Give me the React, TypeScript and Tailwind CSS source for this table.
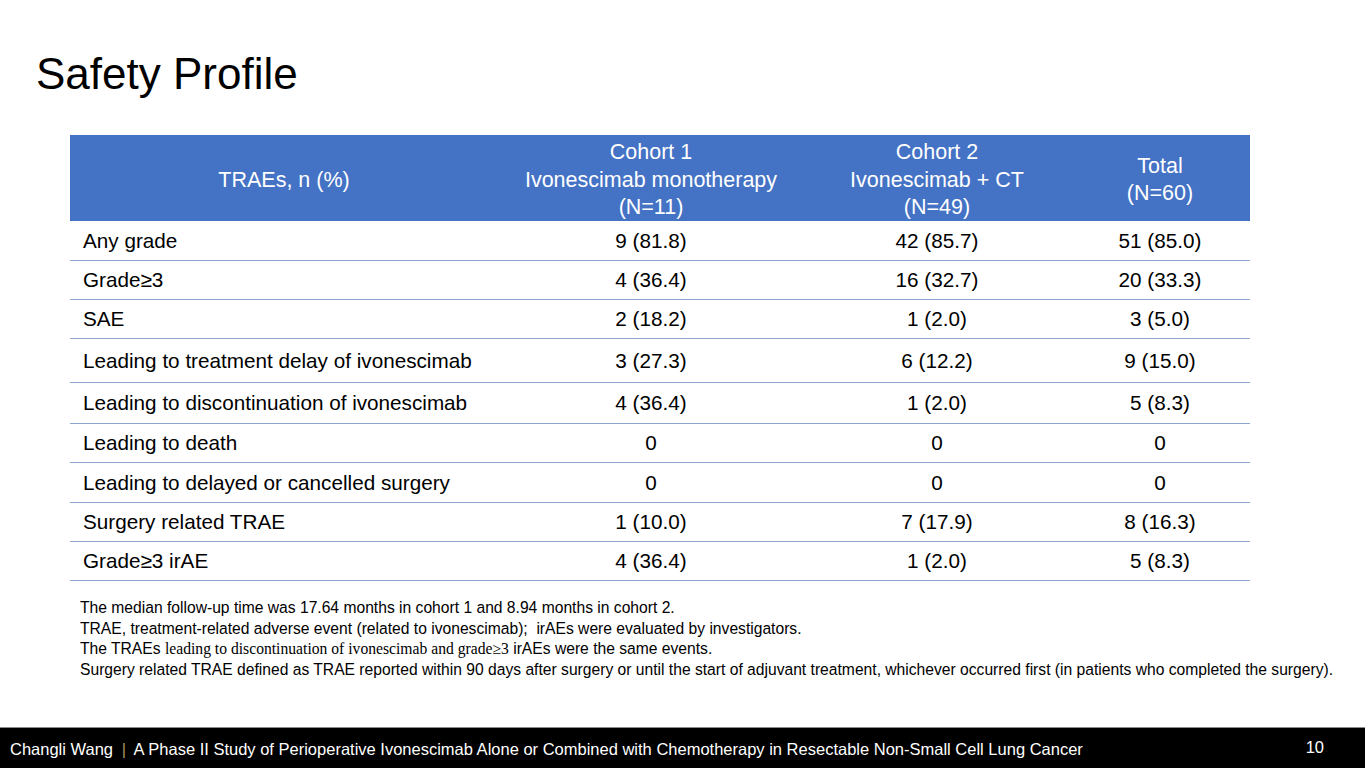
const rows = [
  { label: "Any grade", c1: "9 (81.8)", c2: "42 (85.7)", t: "51 (85.0)", h: "h-[40px]" },
  { label: "Grade≥3", c1: "4 (36.4)", c2: "16 (32.7)", t: "20 (33.3)", h: "h-[39px]" },
  { label: "SAE", c1: "2 (18.2)", c2: "1 (2.0)", t: "3 (5.0)", h: "h-[39px]" },
  { label: "Leading to treatment delay of ivonescimab", c1: "3 (27.3)", c2: "6 (12.2)", t: "9 (15.0)", h: "h-[44px]" },
  { label: "Leading to discontinuation of ivonescimab", c1: "4 (36.4)", c2: "1 (2.0)", t: "5 (8.3)", h: "h-[41px]" },
  { label: "Leading to death", c1: "0", c2: "0", t: "0", h: "h-[39px]" },
  { label: "Leading to delayed or cancelled surgery", c1: "0", c2: "0", t: "0", h: "h-[40px]" },
  { label: "Surgery related TRAE", c1: "1 (10.0)", c2: "7 (17.9)", t: "8 (16.3)", h: "h-[39px]" },
  { label: "Grade≥3 irAE", c1: "4 (36.4)", c2: "1 (2.0)", t: "5 (8.3)", h: "h-[39px]" },
]

const cols = "grid grid-cols-[428px_306px_266px_180px]"

const App = () => {
  return (
    <div className="w-[1365px] h-[768px] bg-white flex flex-col font-['Liberation_Sans',Arial,sans-serif] text-black overflow-hidden">
      <h1 className="mt-[52px] ml-[36px] text-[44px] leading-[44px] font-normal">Safety Profile</h1>

      <div className="mt-[39px] ml-[70px] w-[1180px]">
        <div className={`${cols} h-[86px] pt-[4px] bg-[#4472c4] text-white text-[21.5px] leading-[27.5px]`}>
          <div className="flex items-center justify-center">TRAEs, n (%)</div>
          <div className="flex flex-col items-center justify-center text-center">
            <span>Cohort 1</span>
            <span>Ivonescimab monotherapy</span>
            <span>(N=11)</span>
          </div>
          <div className="flex flex-col items-center justify-center text-center">
            <span>Cohort 2</span>
            <span>Ivonescimab + CT</span>
            <span>(N=49)</span>
          </div>
          <div className="flex flex-col items-center justify-center text-center">
            <span>Total</span>
            <span>(N=60)</span>
          </div>
        </div>
        {rows.map((r) => (
          <div key={r.label} className={`${cols} ${r.h} border-b border-[#8fa6cc] text-[20.7px]`}>
            <div className="flex items-center pl-[13px]">{r.label}</div>
            <div className="flex items-center justify-center">{r.c1}</div>
            <div className="flex items-center justify-center">{r.c2}</div>
            <div className="flex items-center justify-center">{r.t}</div>
          </div>
        ))}
      </div>

      <div className="mt-[17px] ml-[80px] text-[15.65px] leading-[20.5px]">
        <p>The median follow-up time was 17.64 months in cohort 1 and 8.94 months in cohort 2.</p>
        <p>TRAE, treatment-related adverse event (related to ivonescimab);&nbsp; irAEs were evaluated by investigators.</p>
        <p>
          The TRAEs{" "}
          <span className="font-['Liberation_Serif',serif]">leading to discontinuation of ivonescimab and grade≥3</span>{" "}
          irAEs were the same events.
        </p>
        <p>Surgery related TRAE defined as TRAE reported within 90 days after surgery or until the start of adjuvant treatment, whichever occurred first (in patients who completed the surgery).</p>
      </div>

      <div className="mt-auto h-[41px] border-t border-[#8a8a8a] bg-black text-white flex items-center justify-between pl-[10px] pr-[41px]">
        <div className="text-[16.5px] pt-[3px]">
          Changli Wang <span className="text-[#a8925e] mx-[4px]">|</span> A Phase II Study of Perioperative Ivonescimab Alone or Combined with Chemotherapy in Resectable Non-Small Cell Lung Cancer
        </div>
        <div className="text-[16.5px] pb-[1px]">10</div>
      </div>
    </div>
  )
}

export default App
